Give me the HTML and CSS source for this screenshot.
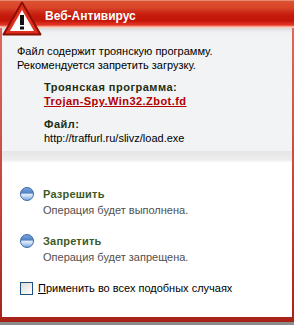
FILE: index.html
```html
<!DOCTYPE html>
<html>
<head>
<meta charset="utf-8">
<link rel="stylesheet" href="styles.css">
</head>
<body>
<div class="window">
  <div class="titlebar">
    <span class="title">Веб-Антивирус</span>
  </div>
  <svg class="warn" width="40" height="36" viewBox="0 0 40 36">
    <path d="M20 1.5 L38.5 33.5 L1.5 33.5 Z" fill="#b81808" stroke="#8a1005" stroke-width="2" stroke-linejoin="round"/>
    <path d="M20 4 L36 32 L4 32 Z" fill="#e03020" stroke="#d82818" stroke-width="1" stroke-linejoin="round"/>
    <path d="M20 9 L32 30 L8 30 Z" fill="#ffffff"/>
    <rect x="18" y="14" width="4" height="10" fill="#111"/>
    <rect x="18" y="25.5" width="4" height="3" fill="#111"/>
  </svg>
  <div class="frame">
    <div class="panel">
      <div class="info">
        <p class="msg">Файл содержит троянскую программу.<br>Рекомендуется запретить загрузку.</p>
        <div class="detail">
          <div class="label">Троянская программа:</div>
          <div class="threat">Trojan-Spy.Win32.Zbot.fd</div>
          <div class="label gap">Файл:</div>
          <div class="path">http://traffurl.ru/slivz/load.exe</div>
        </div>
      </div>
      <div class="band"></div>
      <div class="actions">
        <div class="option">
          <span class="radio"></span>
          <div class="opt-text">
            <div class="opt-title">Разрешить</div>
            <div class="opt-desc">Операция будет выполнена.</div>
          </div>
        </div>
        <div class="option">
          <span class="radio"></span>
          <div class="opt-text">
            <div class="opt-title">Запретить</div>
            <div class="opt-desc">Операция будет запрещена.</div>
          </div>
        </div>
        <label class="check">
          <span class="box"></span>
          <span class="check-text"><u>П</u>рименить во всех подобных случаях</span>
        </label>
      </div>
    </div>
  </div>
</div>
</body>
</html>
```

FILE: styles.css
```css
html, body {
  margin: 0;
  padding: 0;
  background: #8c8c8c;
}
body {
  font-family: "Liberation Sans", "DejaVu Sans", sans-serif;
  font-size: 11px;
  color: #000;
}
.window {
  position: relative;
  width: 294px;
  height: 325px;
  overflow: hidden;
}
.titlebar {
  height: 28px;
  box-sizing: border-box;
  padding-left: 45px;
  background: linear-gradient(to bottom,
    #f0c0b0 0px, #dc5232 1px, #d84428 8px, #cc2a18 12px,
    #c41a0c 16px, #c21608 21px, #d82a1c 23px, #e03424 25px,
    #f07868 26px, #ffc8b8 27px, #ffc8b8 28px);
}
.title {
  display: block;
  padding-top: 9px;
  color: #fff;
  font-weight: bold;
  font-size: 12px;
  line-height: 14px;
}
.warn {
  position: absolute;
  left: 2px;
  top: 1px;
}
.frame {
  height: 294px;
  box-sizing: border-box;
  padding: 0 2px 5px 2px;
  background: linear-gradient(to bottom, #e0685e 0%, #c84038 60%, #a82218 100%);
}
.panel {
  height: 100%;
  background: #fff;
  display: flex;
  flex-direction: column;
}
.info {
  background: linear-gradient(to bottom, #dadada 0px, #eef0f2 4px, #f1f3f5 8px);
  padding: 16px 0 6px 15px;
}
.msg {
  margin: 0;
  line-height: 14px;
}
.detail {
  padding-left: 27px;
  margin-top: 8px;
}
.label {
  font-weight: bold;
  color: #1e2e12;
  line-height: 14px;
  letter-spacing: 0.5px;
}
.label.gap {
  margin-top: 9px;
}
.threat {
  font-weight: bold;
  color: #b00000;
  text-decoration: underline;
  line-height: 14px;
  letter-spacing: 0.45px;
}
.path {
  line-height: 14px;
}
.band {
  height: 11px;
  background: linear-gradient(to bottom, #e6e6e6, #ececec 70%, #f6f6f6);
}
.actions {
  padding: 24px 0 0 18px;
}
.option {
  display: flex;
  align-items: flex-start;
  margin-bottom: 15px;
}
.radio {
  box-sizing: border-box;
  width: 14px;
  height: 14px;
  border-radius: 50%;
  margin-top: 1px;
  margin-right: 9px;
  border: 1px solid #3a68a6;
  background: linear-gradient(to bottom, #7aa4dc 0%, #4f82c4 40%, #e6eef9 55%, #b4d0f0 75%, #7aa6dc 100%);
}
.opt-title {
  font-weight: bold;
  color: #3c5a26;
  line-height: 16px;
  letter-spacing: 0.2px;
}
.opt-desc {
  color: #505050;
  line-height: 16px;
}
.check {
  display: flex;
  align-items: center;
  margin-top: 6px;
}
.box {
  width: 11px;
  height: 11px;
  border: 1px solid #1c5180;
  background: linear-gradient(135deg, #dcdcd6, #ffffff);
  margin-right: 5px;
}
.check-text {
  color: #000;
  line-height: 16px;
}
```
